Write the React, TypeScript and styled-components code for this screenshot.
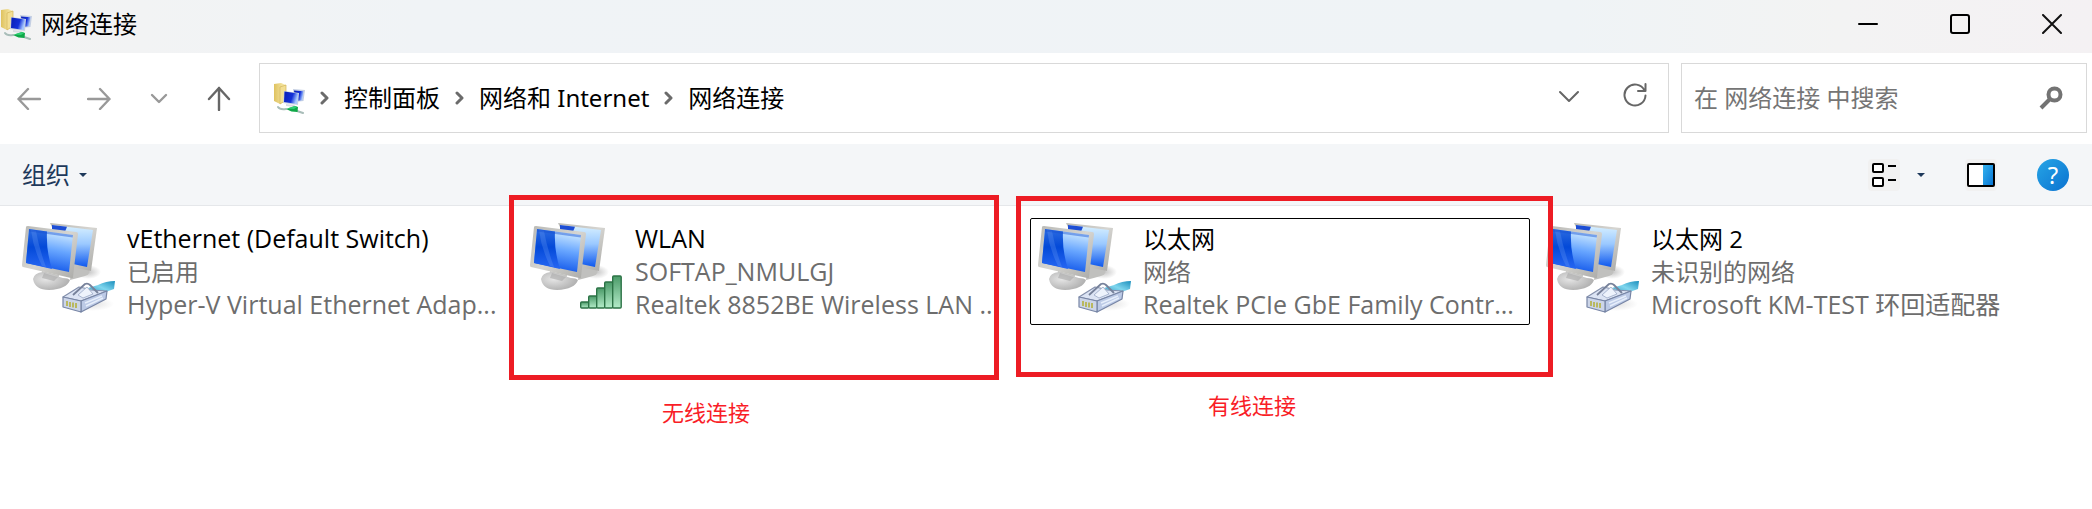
import React from "react";
import styled, { createGlobalStyle } from "styled-components";

const GlobalStyle = createGlobalStyle`
  * { box-sizing: border-box; }
  body {
    margin: 0;
    background: #fff;
    color: #000;
    font-family: "Noto Sans", "Noto Sans CJK SC", sans-serif;
    font-size: 24px;
    line-height: 34px;
  }
  button, input { font: inherit; color: inherit; }
`;

const Window = styled.div`
  display: flex;
  flex-direction: column;
`;

const TitleBar = styled.header`
  display: flex;
  align-items: center;
  height: 53px;
  padding-bottom: 5px;
  background: linear-gradient(90deg, #f3f3f3 0%, #f0f3f6 20%, #eff3f6 75%, #f3f3f3 88%, #f4f1f3 100%);
`;

const Title = styled.h1`
  flex: 1;
  margin: 0 0 0 9px;
  font-size: 24px;
  font-weight: 400;
`;

const PlainButton = styled.button<{ $w?: number; $h?: number }>`
  display: flex;
  flex: none;
  align-items: center;
  justify-content: center;
  width: ${(p) => p.$w ?? 50}px;
  height: ${(p) => p.$h ?? 50}px;
  padding: 0;
  border: 0;
  border-radius: 4px;
  background: transparent;
`;

const WindowControls = styled.div`
  display: flex;
  align-items: center;
  gap: 12px;
`;

const NavBar = styled.nav`
  display: flex;
  align-items: center;
  height: 91px;
  padding: 0 5px 1px 4px;
`;

const NavButtons = styled.div`
  display: flex;
  gap: 20px;
  margin-right: 15px;
`;

const Field = styled.div`
  display: flex;
  align-items: center;
  height: 70px;
  border: 1px solid #d9d9d9;
  background: #fff;
`;

const AddressBar = styled(Field)`
  flex: 1;
  min-width: 0;
  padding: 0 8px 0 13px;
`;

const Crumbs = styled.ol`
  display: flex;
  flex: 1;
  align-items: center;
  margin: 0;
  padding: 0;
  list-style: none;
`;

const Crumb = styled.li`
  display: flex;
  align-items: center;
  gap: 15px;
  margin-left: 15px;
  white-space: nowrap;
`;

const CrumbLink = styled.a`
  color: #000;
  text-decoration: none;
`;

const SearchBox = styled(Field)`
  width: 406px;
  margin-left: 12px;
  padding: 0 10px 0 12px;
`;

const SearchInput = styled.input`
  flex: 1;
  min-width: 0;
  padding: 0;
  border: 0;
  outline: 0;
  background: transparent;
  &::placeholder { color: #757575; opacity: 1; }
`;

const CommandBar = styled.div`
  display: flex;
  align-items: center;
  justify-content: space-between;
  height: 62px;
  padding: 0 23px 0 22px;
  border-bottom: 1px solid #e5e7ea;
  background: #f4f6f8;
`;

const OrganizeButton = styled.button`
  display: flex;
  align-items: center;
  gap: 9px;
  padding: 0;
  border: 0;
  background: transparent;
  color: #1e395b;
`;

const CommandIcons = styled.div`
  display: flex;
  align-items: center;
`;

const ToolButton = styled(PlainButton)<{ $gap?: number; $tint?: boolean }>`
  margin-left: ${(p) => p.$gap ?? 0}px;
  background: ${(p) => (p.$tint ? "#f1f1f1" : "transparent")};
`;

const HelpButton = styled.button`
  width: 32px;
  height: 32px;
  margin-left: 40px;
  padding: 0;
  border: 0;
  border-radius: 50%;
  background: linear-gradient(135deg, #27a5e6, #0a72d0);
  color: #fff;
  font-size: 24px;
  line-height: 32px;
  text-align: center;
`;

const Connections = styled.ul`
  display: grid;
  grid-template-columns: repeat(auto-fill, 500px);
  gap: 8px;
  margin: 0;
  padding: 12px 0 140px 14px;
  list-style: none;
`;

const Connection = styled.li<{ $focused?: boolean }>`
  position: relative;
  display: flex;
  height: 107px;
  padding: 3px 7px;
  border: 1px solid ${(p) => (p.$focused ? "#000" : "transparent")};
  border-radius: 2px;
`;

const Details = styled.div`
  flex: 1;
  min-width: 0;
  margin-left: 9px;
  white-space: nowrap;
  line-height: 33px;
`;

const DetailLine = styled.div<{ $primary?: boolean; $latin?: boolean }>`
  color: ${(p) => (p.$primary ? "#000" : "#6d6d6d")};
  font-family: "Open Sans", "Noto Sans CJK SC", sans-serif;
  font-size: ${(p) => (p.$latin ? 25 : 24)}px;
`;

const Mark = styled.div<{ $left: number; $top: number; $w: number; $h: number }>`
  position: absolute;
  z-index: 1;
  left: ${(p) => p.$left}px;
  top: ${(p) => p.$top}px;
  width: ${(p) => p.$w}px;
  height: ${(p) => p.$h}px;
  border: 5px solid #ed1c24;
  pointer-events: none;
`;

const MarkLabel = styled.span<{ $left: number; $top: number }>`
  position: absolute;
  left: ${(p) => p.$left}px;
  top: ${(p) => p.$top}px;
  color: #f91d27;
  font-size: 22px;
  line-height: 30px;
  white-space: nowrap;
`;

const Line = ({ d, w, h, color = "#666", sw = 2 }: { d: string; w: number; h: number; color?: string; sw?: number }) => (
  <svg width={w} height={h} viewBox={`0 0 ${w} ${h}`} fill="none" stroke={color} strokeWidth={sw} strokeLinecap="round" strokeLinejoin="round" aria-hidden="true">
    <path d={d} />
  </svg>
);

const Caret = () => (
  <svg width="8" height="4" viewBox="0 0 8 4" aria-hidden="true"><path d="M0 0h8L4 4z" fill="#1e395b" /></svg>
);

const CrumbArrow = () => <Line w={9} h={14} d="M2 2l5 5-5 5" sw={3} color="#6b6b6b" />;

const FolderNetIcon = () => (
  <svg width="32" height="32" viewBox="0 0 32 32" aria-hidden="true">
    <defs>
      <linearGradient id="fold" x1="0" x2="1"><stop offset="0" stopColor="#dfc25f" /><stop offset="1" stopColor="#fbf0b6" /></linearGradient>
      <linearGradient id="mini" x1="0" x2="1" y2=".3"><stop offset="0" stopColor="#0a1fb4" /><stop offset=".65" stopColor="#1330d8" /><stop offset="1" stopColor="#a5c6ff" /></linearGradient>
    </defs>
    <path d="M1 2l7-1 5 2v16l-6 3-6-3z" fill="url(#fold)" />
    <path d="M7 5l6-2v15l-6 4z" fill="#f3df93" stroke="#d4b65a" strokeWidth=".7" />
    <path d="M20 7l12 1-1.500 11-9 1z" fill="#c5cfe2" />
    <path d="M21 8.500l9.500.7-1.200 9-7 .8z" fill="url(#mini)" />
    <path d="M11 9l15 2-1 12-15-2z" fill="#c9d2e2" />
    <path d="M11.500 9.500l13.500 2-1 10.500-13-2z" fill="url(#mini)" />
    <path d="M13 22l9 1-1 2-8-1z" fill="#d9dce2" />
    <path d="M5 25q2 3 8 2M24 29l6 2" fill="none" stroke="#a9bdb9" strokeWidth="2" strokeLinecap="round" />
    <path d="M13 27l9-3 3 1-.5 5-6-.5z" fill="#0fa848" />
    <path d="M14 26.500l8-2.500 2 1-3 2z" fill="#2fd074" />
  </svg>
);

const NetworkIcon = ({ kind }: { kind: "cable" | "wifi" }) => (
  <svg width="96" height="96" viewBox="0 0 96 96" aria-hidden="true">
    <defs>
      <linearGradient id="scrA" x1=".3" y1="1" x2=".5" y2="0"><stop offset="0" stopColor="#0a50e8" /><stop offset=".55" stopColor="#68a6ff" /><stop offset="1" stopColor="#d3edff" /></linearGradient>
      <linearGradient id="scrB" x1="0" y1="0" x2="0" y2="1"><stop offset="0" stopColor="#d9f1ff" /><stop offset=".45" stopColor="#9bc9ff" /><stop offset="1" stopColor="#0d57ee" /></linearGradient>
      <linearGradient id="dark" x1="0" y1="0" x2="0" y2="1"><stop offset="0" stopColor="#2c6be0" /><stop offset=".45" stopColor="#0349d8" /><stop offset="1" stopColor="#2767f3" /></linearGradient>
      <linearGradient id="rim" x1="0" y1="0" x2="1" y2="1"><stop offset="0" stopColor="#b9b9b5" /><stop offset=".5" stopColor="#d6d5d1" /><stop offset="1" stopColor="#a9a9a6" /></linearGradient>
      <radialGradient id="foot" cx=".35" cy=".4" r=".7"><stop offset="0" stopColor="#e6e6e6" /><stop offset="1" stopColor="#acacac" /></radialGradient>
      <radialGradient id="shade"><stop offset="0" stopColor="#888" stopOpacity=".5" /><stop offset="1" stopColor="#888" stopOpacity="0" /></radialGradient>
      <linearGradient id="bar" x1="0" y1="0" x2="0" y2="1"><stop offset="0" stopColor="#4a9a68" /><stop offset="1" stopColor="#b4ecc9" /></linearGradient>
      <linearGradient id="wire" x1="0" y1="1" x2="1" y2="0"><stop offset="0" stopColor="#2d94bd" /><stop offset=".5" stopColor="#7fd6ee" /><stop offset="1" stopColor="#1b8fbd" /></linearGradient>
    </defs>
    <ellipse cx="66" cy="50" rx="13" ry="7" fill="url(#shade)" />
    <path d="M50 42l16 4q4 6-3 8t-15 4z" fill="#c0c0be" />
    <path d="M28 1l47 5-6 43-20-4z" fill="url(#rim)" />
    <path d="M30 3l41 5-6 37-14-3z" fill="url(#scrB)" />
    <path d="M30 3l15 1.800-2 5-13-1z" fill="#1d4ed5" />
    <path d="M20 49l17 4-1 10-17-3z" fill="#c4c4c2" />
    <path d="M11 57q1-6 10-7l20 6q5 0 7 2-3 9-21 10Q13 68 11 57z" fill="url(#foot)" />
    <path d="M22 51l14 4-4 4-12-3z" fill="#a9a9a9" opacity=".6" />
    <path d="M4 5q0-1 2-1l48 6q2 0 2 2l-5 43q0 2-2 1L1 45q-1 0-1-2z" fill="url(#rim)" />
    <path d="M7 7l44 6-4 37L4 41z" fill="url(#scrA)" />
    <path d="M7 7l18 2.500q-1 19 5 37.500L4 41z" fill="url(#dark)" />
    <path d="M9 8l5 1q3 17 10 36l-4-1Q11 26 9 8z" fill="#77a6f7" opacity=".25" />
    <path d="M7 7l44 6-.3 2.500L7 9.500z" fill="#174fd2" opacity=".45" />
    {kind === "cable" ? (
      <g strokeLinejoin="round">
        <ellipse cx="70" cy="82" rx="22" ry="7" fill="url(#shade)" opacity=".5" />
        <path d="M66 66l10-3q8-4 17-4l-1 8-14 5z" fill="url(#wire)" />
        <path d="M41 75l16-10q6 1 12 3l16 1-26 10z" fill="#dce4f4" stroke="#8490ac" strokeWidth="1.200" />
        <path d="M59 79l26-10-1 8-25 13z" fill="#bccae6" stroke="#7785a5" strokeWidth="1.200" />
        <path d="M41 75l18 4v11l-18-5z" fill="#ccd5e8" stroke="#7785a5" strokeWidth="1.200" />
        <path d="M51 73l12-11q3-1 5 1l8 8" fill="none" stroke="#76819a" strokeWidth="1.800" />
        <path d="M56 73l9-8 6 7-10 4z" fill="#eef3fc" stroke="#9aa8c5" strokeWidth=".8" />
        <path d="M45 79v5M48 80v5M51 80.500v5M54 81v5" stroke="#b9b860" strokeWidth="2" />
        <path d="M63 81l17-7M64 84l17-8" stroke="#e6eefb" strokeWidth="1.500" />
      </g>
    ) : (
      <g fill="url(#bar)" stroke="#2c7346" strokeWidth="1.400">
        <rect x="50.700" y="80" width="8" height="6" rx="1" />
        <rect x="58.700" y="74" width="8" height="12" rx="1" />
        <rect x="66.700" y="66" width="8" height="20" rx="1" />
        <rect x="74.700" y="60" width="8" height="26" rx="1" />
        <rect x="82.700" y="54" width="8.500" height="32" rx="1" />
      </g>
    )}
  </svg>
);

type Item = { name: string; status: string; device: string; kind: "cable" | "wifi"; focused?: boolean; mark?: React.ReactNode };

const items: Item[] = [
  { name: "vEthernet (Default Switch)", status: "已启用", device: "Hyper-V Virtual Ethernet Adap...", kind: "cable" },
  {
    name: "WLAN", status: "SOFTAP_NMULGJ", device: "Realtek 8852BE Wireless LAN ...", kind: "wifi",
    mark: (<><Mark $left={-14} $top={-24} $w={490} $h={185} /><MarkLabel $left={139} $top={178}>无线连接</MarkLabel></>),
  },
  {
    name: "以太网", status: "网络", device: "Realtek PCIe GbE Family Contr...", kind: "cable", focused: true,
    mark: (<><Mark $left={-15} $top={-23} $w={537} $h={181} /><MarkLabel $left={177} $top={171}>有线连接</MarkLabel></>),
  },
  { name: "以太网 2", status: "未识别的网络", device: "Microsoft KM-TEST 环回适配器", kind: "cable" },
];

const crumbs = ["控制面板", "网络和 Internet", "网络连接"];

const isLatin = (text: string) => /[A-Za-z]/.test(text);

export default function App() {
  return (
    <Window lang="zh-CN">
      <GlobalStyle />
      <TitleBar>
        <FolderNetIcon />
        <Title>网络连接</Title>
        <WindowControls>
          <PlainButton $w={80} $h={48} aria-label="最小化"><Line w={20} h={20} d="M1 10h18" color="#000" /></PlainButton>
          <PlainButton $w={80} $h={48} aria-label="最大化">
            <svg width="20" height="20" viewBox="0 0 20 20" fill="none" stroke="#000" strokeWidth="2"><rect x="1" y="1" width="18" height="18" rx="2" /></svg>
          </PlainButton>
          <PlainButton $w={80} $h={48} aria-label="关闭"><Line w={20} h={20} d="M1 1l18 18M19 1L1 19" color="#111" /></PlainButton>
        </WindowControls>
      </TitleBar>
      <NavBar>
        <NavButtons>
          <PlainButton aria-label="后退"><Line w={24} h={24} d="M23 13H1.500M11 3L1.500 13l9.500 10" color="#999" sw={2.4} /></PlainButton>
          <PlainButton aria-label="前进"><Line w={24} h={24} d="M1 13h21.500M13 3l9.500 10-9.500 10" color="#999" sw={2.4} /></PlainButton>
          <PlainButton $w={30} aria-label="最近位置"><Line w={18} h={12} d="M2 3l7 7 7-7" color="#999" sw={2.4} /></PlainButton>
          <PlainButton aria-label="向上"><Line w={24} h={26} d="M12 25V3M2 14L12 3l10 11" color="#666" sw={2.4} /></PlainButton>
        </NavButtons>
        <AddressBar>
          <FolderNetIcon />
          <Crumbs>
            {crumbs.map((c) => (
              <Crumb key={c}><CrumbArrow /><CrumbLink href="#">{c}</CrumbLink></Crumb>
            ))}
          </Crumbs>
          <PlainButton $w={82} aria-label="历史"><Line w={20} h={16} d="M1 2l9 9 9-9" /></PlainButton>
          <PlainButton $w={50} aria-label="刷新">
            <Line w={24} h={30} d="M21.500 7.500A10.500 10.500 0 1 0 22.500 12.500M22.500 1v7H15" />
          </PlainButton>
        </AddressBar>
        <SearchBox>
          <SearchInput type="text" aria-label="搜索" placeholder="在 网络连接 中搜索" />
          <PlainButton aria-label="开始搜索">
            <svg width="24" height="24" viewBox="0 0 24 24" fill="none" stroke="#737373" aria-hidden="true">
              <circle cx="15.500" cy="8.500" r="6" strokeWidth="4" /><path d="M11 13L2 22" strokeWidth="4" />
            </svg>
          </PlainButton>
        </SearchBox>
      </NavBar>
      <CommandBar>
        <OrganizeButton>组织 <Caret /></OrganizeButton>
        <CommandIcons>
          <ToolButton $w={32} $h={32} $tint aria-label="更改视图">
            <svg width="26" height="26" viewBox="0 0 26 26" fill="#fff" stroke="#000" strokeWidth="2" aria-hidden="true">
              <rect x="2" y="2" width="10" height="8" rx="1" /><rect x="2" y="16" width="10" height="8" rx="1" />
              <path d="M17 4h8M17 18h8" />
            </svg>
          </ToolButton>
          <ToolButton $w={24} $h={32} $gap={9} aria-label="更多选项"><Caret /></ToolButton>
          <ToolButton $w={32} $h={32} $gap={32} $tint aria-label="预览窗格">
            <svg width="28" height="24" viewBox="0 0 28 24" aria-hidden="true">
              <defs><linearGradient id="pane" x1="0" y1="0" x2="1" y2="1"><stop offset="0" stopColor="#35b4ef" /><stop offset="1" stopColor="#0671d2" /></linearGradient></defs>
              <rect x="1" y="1" width="26" height="22" rx="1" fill="#fff" />
              <path d="M16 1h11v22H16z" fill="url(#pane)" />
              <rect x="1" y="1" width="26" height="22" rx="1" fill="none" stroke="#000" strokeWidth="2" />
            </svg>
          </ToolButton>
          <HelpButton aria-label="帮助">?</HelpButton>
        </CommandIcons>
      </CommandBar>
      <Connections>
        {items.map((it) => (
          <Connection key={it.name} $focused={it.focused}>
            <NetworkIcon kind={it.kind} />
            <Details>
              <DetailLine $primary $latin={isLatin(it.name)}>{it.name}</DetailLine>
              <DetailLine $latin={isLatin(it.status)}>{it.status}</DetailLine>
              <DetailLine $latin>{it.device}</DetailLine>
            </Details>
            {it.mark}
          </Connection>
        ))}
      </Connections>
    </Window>
  );
}
